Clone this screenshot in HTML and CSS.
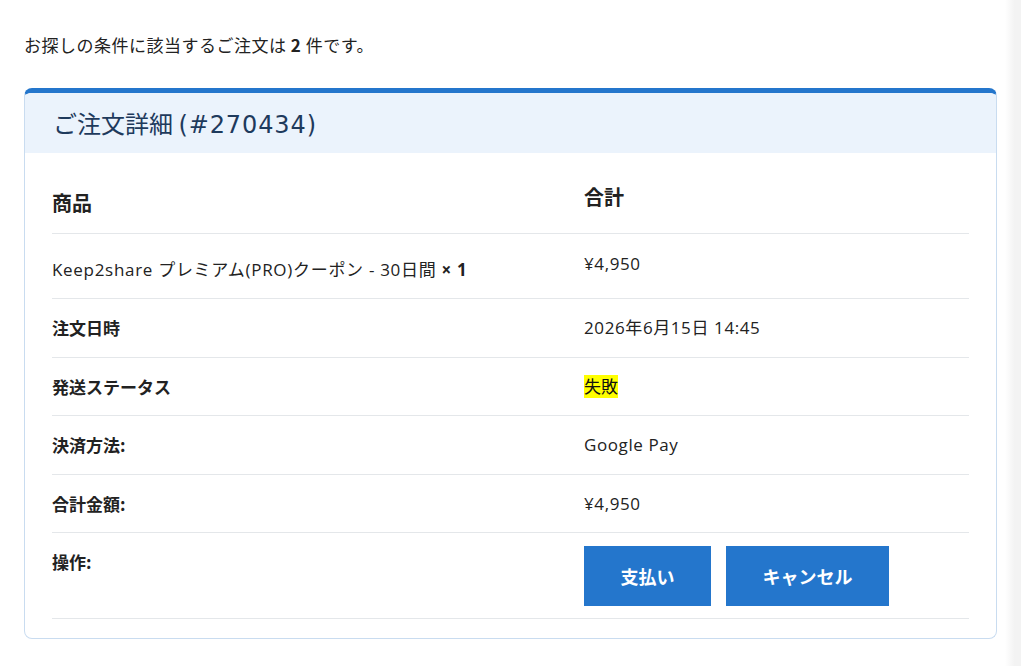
FILE: index.html
```html
<!DOCTYPE html>
<html lang="ja">
<head>
    <meta charset="UTF-8">
    <title>ご注文詳細</title>
    <link rel="stylesheet" href="styles.css">
</head>
<body>
    <div class="page">
        <main class="main">
            <p class="result">お探しの条件に該当するご注文は <strong>2</strong> 件です。</p>

            <section class="order-card">
                <h2 class="order-title">ご注文詳細 <span class="order-no">(#270434)</span></h2>
                <div class="order-body">
                    <table class="order-table">
                        <tr class="head-row">
                            <th class="col-label">商品</th>
                            <th class="col-value">合計</th>
                        </tr>
                        <tr class="item-row">
                            <td class="col-label product">Keep2share プレミアム(PRO)クーポン - 30日間 <strong>× 1</strong></td>
                            <td class="col-value">¥4,950</td>
                        </tr>
                        <tr>
                            <th class="col-label">注文日時</th>
                            <td class="col-value">2026年6月15日 14:45</td>
                        </tr>
                        <tr>
                            <th class="col-label">発送ステータス</th>
                            <td class="col-value"><mark class="status">失敗</mark></td>
                        </tr>
                        <tr>
                            <th class="col-label">決済方法:</th>
                            <td class="col-value">Google Pay</td>
                        </tr>
                        <tr>
                            <th class="col-label">合計金額:</th>
                            <td class="col-value">¥4,950</td>
                        </tr>
                        <tr class="action-row">
                            <th class="col-label">操作:</th>
                            <td class="col-value">
                                <div class="actions">
                                    <button class="btn">支払い</button>
                                    <button class="btn">キャンセル</button>
                                </div>
                            </td>
                        </tr>
                    </table>
                </div>
            </section>
        </main>
        <div class="scroll-edge"></div>
    </div>
</body>
</html>
```

FILE: styles.css
```css
body { margin: 0; font-family: "Open Sans", "Noto Sans CJK JP", sans-serif; color: #222; background: #fff; }
.page { display: flex; min-height: 666px; }
.main { flex: 1; padding: 22px 8px 24px 24px; }
.scroll-edge { width: 16px; background: linear-gradient(to right, #fff, #f3f3f3 60%); }

.result { margin: 11px 0 31px; font-family: "Noto Sans CJK JP", sans-serif; font-size: 17px; line-height: 24px; letter-spacing: 0.5px; color: #222; }
.result strong { font-weight: 700; }

.order-card { border: 1px solid #c9dcf0; border-top: 5px solid #2476cc; border-radius: 8px; overflow: hidden; }
.order-title { margin: 0; padding: 0 25px 0 28px; height: 60px; line-height: 60px; background: #ebf3fc; font-family: "Noto Sans CJK JP", sans-serif; font-size: 24px; font-weight: 400; color: #1e3a5c; }
.order-no { font-family: "DejaVu Sans", sans-serif; font-size: 24px; letter-spacing: 0.9px; }
.order-body { padding: 0 27px 19px 27px; }

.order-table { width: 100%; border-collapse: collapse; font-size: 17px; }
.order-table th, .order-table td { text-align: left; border-bottom: 1px solid #e4e7ea; padding: 17px 12px; line-height: 23.5px; vertical-align: top; }
.order-table td { letter-spacing: 0.6px; }
.order-table th { font-family: "Noto Sans CJK JP", sans-serif; font-size: 17px; font-weight: 700; }
.order-table .col-label { width: 508px; padding-left: 0; }

.head-row th { font-size: 20px; line-height: 24px; }
.head-row .col-label { padding: 38px 0 18px; }
.head-row .col-value { padding: 32px 12px 24px; }

.item-row td { padding: 18px 12px 22px; line-height: 24px; }
.item-row .product { padding: 24px 0 16px; letter-spacing: 0.7px; }
.product strong { font-weight: 700; }

.status { background: #ffff00; color: #111; padding: 0; letter-spacing: 0; }

.action-row th { padding: 17px 0 44px; line-height: 24px; }
.action-row td { padding: 13px 12px 12px; line-height: 24px; }
.actions { display: flex; gap: 15px; }
.btn { height: 60px; padding: 0 36.5px; border: none; border-radius: 0; background: #2476cc; color: #fff; font-family: "Noto Sans CJK JP", sans-serif; font-size: 18px; font-weight: 700; cursor: pointer; }
```
